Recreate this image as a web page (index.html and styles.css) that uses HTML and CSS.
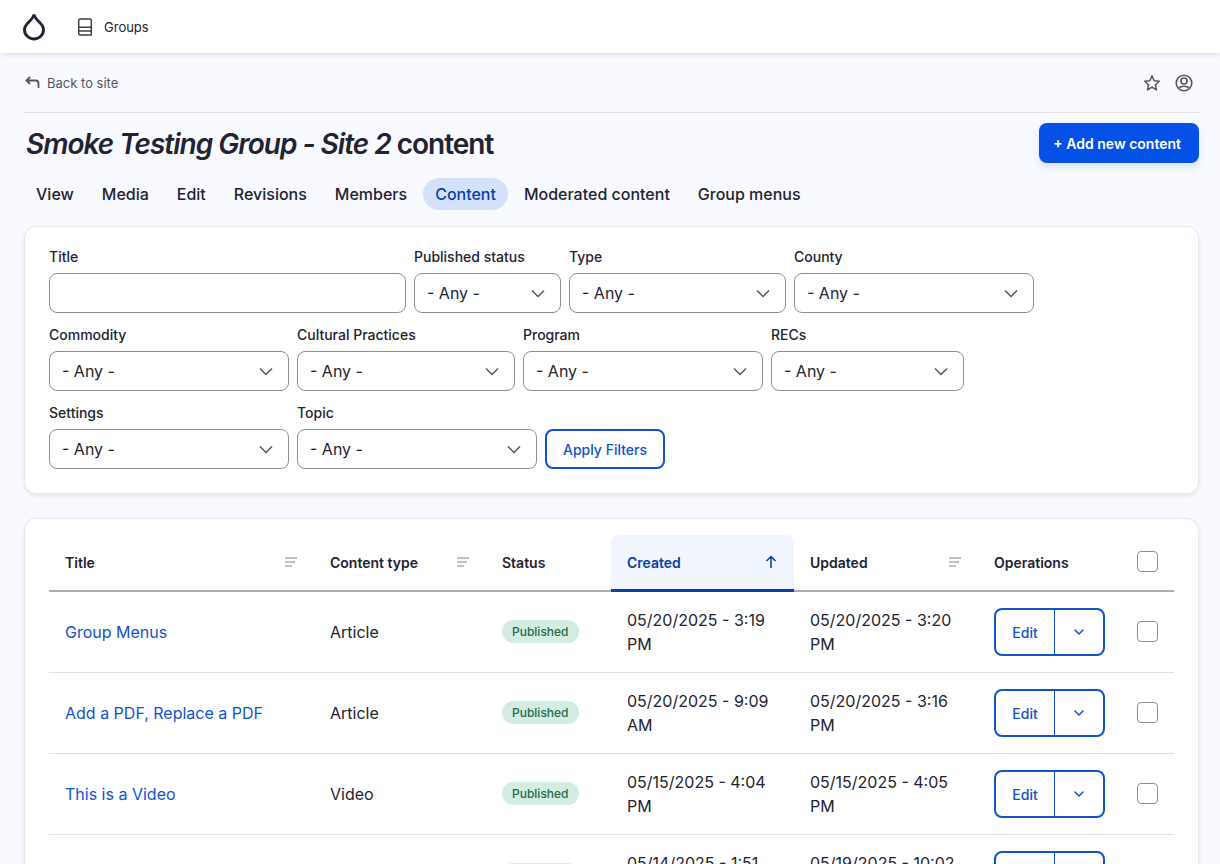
FILE: index.html
```html
<!DOCTYPE html>
<html lang="en">
<head>
  <meta charset="utf-8">
  <meta name="viewport" content="width=device-width, initial-scale=1">
  <title>Smoke Testing Group - Site 2 content</title>
  <link rel="stylesheet" href="styles.css">
</head>
<body>
  <svg class="sprite" aria-hidden="true">
    <symbol id="icon-sort" viewBox="0 0 12 10">
      <path d="M0 1h12M0 5h10M0 9h7" fill="none" stroke="currentColor" stroke-width="1.3"/>
    </symbol>
    <symbol id="icon-down" viewBox="0 0 10 6">
      <path d="M1 1l4 4 4-4" fill="none" stroke="currentColor" stroke-width="1.5" stroke-linecap="round" stroke-linejoin="round"/>
    </symbol>
  </svg>

  <!-- Toolbar -->
  <header class="toolbar">
    <a href="#" class="toolbar-logo" aria-label="Home">
      <svg width="22" height="28" viewBox="0 0 22 28">
        <path d="M11 1.500C10.200 4.700 7.900 6.900 5.800 9C3.600 11.200 1.500 13.700 1.500 16.700C1.500 21.900 5.800 26 11 26C16.200 26 20.500 21.900 20.500 16.700C20.500 13.700 18.400 11.200 16.200 9C14.100 6.900 11.800 4.700 11 1.500Z" fill="none" stroke="#222330" stroke-width="2.9"/>
      </svg>
    </a>
    <a href="#" class="toolbar-link">
      <svg width="16" height="18" viewBox="0 0 16 18">
        <path d="M3.200 1h9.600a1.500 1.500 0 0 1 1.500 1.500V17H3.200a1.500 1.500 0 0 1-1.500-1.500v-13A1.500 1.500 0 0 1 3.200 1zM1.700 9.200h12.600M2 12.900h12.300" fill="none" stroke="#414247" stroke-width="1.5"/>
      </svg>
      Groups
    </a>
  </header>

  <div class="page">
    <div class="secondary-bar">
      <a href="#" class="back-link">
        <svg width="15" height="14" viewBox="0 0 15 14">
          <path d="M5 1L1.500 4.500L5 8M1.500 4.500H10.500a3 3 0 0 1 3 3V12" fill="none" stroke="currentColor" stroke-width="1.8"/>
        </svg>
        Back to site
      </a>
      <div class="user-links">
        <a href="#" aria-label="Shortcuts">
          <svg width="18" height="18" viewBox="0 0 18 18">
            <path d="M9 1.800l2.100 4.900 5.200.5-3.900 3.500 1.100 5.200L9 13.200l-4.500 2.700 1.100-5.200L1.700 7.200l5.200-.5z" fill="none" stroke="currentColor" stroke-width="1.500" stroke-linejoin="round"/>
          </svg>
        </a>
        <a href="#" aria-label="Account">
          <svg width="18" height="18" viewBox="0 0 18 18">
            <g fill="none" stroke="currentColor" stroke-width="1.600">
              <circle cx="9" cy="9" r="7.800"/>
              <circle cx="9" cy="7" r="3"/>
              <path d="M3.500 14.300c1-2 2.600-2.100 5.500-2.100s4.500.1 5.500 2.100"/>
            </g>
          </svg>
        </a>
      </div>
    </div>

    <div class="title-bar">
      <h1><em>Smoke Testing Group - Site 2</em> content</h1>
      <button type="button" class="btn-primary">+ Add new content</button>
    </div>

    <nav class="tabs">
      <a href="#">View</a>
      <a href="#">Media</a>
      <a href="#">Edit</a>
      <a href="#">Revisions</a>
      <a href="#">Members</a>
      <a href="#" class="active">Content</a>
      <a href="#">Moderated content</a>
      <a href="#">Group menus</a>
    </nav>

    <form class="card filters">
      <div class="field field-title">
        <label for="title">Title</label>
        <input type="text" id="title" name="title">
      </div>
      <div class="field field-status">
        <label for="status">Published status</label>
        <select id="status" name="status"><option>- Any -</option></select>
      </div>
      <div class="field field-type">
        <label for="type">Type</label>
        <select id="type" name="type"><option>- Any -</option></select>
      </div>
      <div class="field">
        <label for="county">County</label>
        <select id="county" name="county"><option>- Any -</option></select>
      </div>
      <div class="field">
        <label for="commodity">Commodity</label>
        <select id="commodity" name="commodity"><option>- Any -</option></select>
      </div>
      <div class="field field-practices">
        <label for="practices">Cultural Practices</label>
        <select id="practices" name="practices"><option>- Any -</option></select>
      </div>
      <div class="field">
        <label for="program">Program</label>
        <select id="program" name="program"><option>- Any -</option></select>
      </div>
      <div class="field field-recs">
        <label for="recs">RECs</label>
        <select id="recs" name="recs"><option>- Any -</option></select>
      </div>
      <div class="field">
        <label for="settings">Settings</label>
        <select id="settings" name="settings"><option>- Any -</option></select>
      </div>
      <div class="field">
        <label for="topic">Topic</label>
        <select id="topic" name="topic"><option>- Any -</option></select>
      </div>
      <button type="button" class="btn-outline">Apply Filters</button>
    </form>

    <div class="card table-card">
      <table>
        <colgroup>
          <col>
          <col class="col-type">
          <col class="col-status">
          <col class="col-created">
          <col class="col-updated">
          <col class="col-ops">
          <col class="col-check">
        </colgroup>
        <thead>
          <tr>
            <th><a href="#" class="sort">Title <svg width="12" height="10"><use href="#icon-sort"/></svg></a></th>
            <th><a href="#" class="sort">Content type <svg width="12" height="10"><use href="#icon-sort"/></svg></a></th>
            <th>Status</th>
            <th class="sorted">
              <a href="#" class="sort">Created
                <svg width="12" height="14" viewBox="0 0 12 14"><path d="M6 13V2M1.500 6L6 1.500L10.500 6" fill="none" stroke="currentColor" stroke-width="1.500"/></svg>
              </a>
            </th>
            <th><a href="#" class="sort">Updated <svg width="12" height="10"><use href="#icon-sort"/></svg></a></th>
            <th>Operations</th>
            <th class="check"><input type="checkbox" aria-label="Select all rows"></th>
          </tr>
        </thead>
        <tbody>
          <tr>
            <td><a href="#">Group Menus</a></td>
            <td>Article</td>
            <td><span class="badge">Published</span></td>
            <td>05/20/2025 - 3:19 PM</td>
            <td>05/20/2025 - 3:20 PM</td>
            <td>
              <div class="dropbutton">
                <button type="button" class="edit">Edit</button>
                <button type="button" class="toggle" aria-label="More actions"><svg width="10" height="6"><use href="#icon-down"/></svg></button>
              </div>
            </td>
            <td class="check"><input type="checkbox" aria-label="Select row"></td>
          </tr>
          <tr>
            <td><a href="#">Add a PDF, Replace a PDF</a></td>
            <td>Article</td>
            <td><span class="badge">Published</span></td>
            <td>05/20/2025 - 9:09 AM</td>
            <td>05/20/2025 - 3:16 PM</td>
            <td>
              <div class="dropbutton">
                <button type="button" class="edit">Edit</button>
                <button type="button" class="toggle" aria-label="More actions"><svg width="10" height="6"><use href="#icon-down"/></svg></button>
              </div>
            </td>
            <td class="check"><input type="checkbox" aria-label="Select row"></td>
          </tr>
          <tr>
            <td><a href="#">This is a Video</a></td>
            <td>Video</td>
            <td><span class="badge">Published</span></td>
            <td>05/15/2025 - 4:04 PM</td>
            <td>05/15/2025 - 4:05 PM</td>
            <td>
              <div class="dropbutton">
                <button type="button" class="edit">Edit</button>
                <button type="button" class="toggle" aria-label="More actions"><svg width="10" height="6"><use href="#icon-down"/></svg></button>
              </div>
            </td>
            <td class="check"><input type="checkbox" aria-label="Select row"></td>
          </tr>
          <tr>
            <td></td>
            <td></td>
            <td><span class="badge">Published</span></td>
            <td>05/14/2025 - 1:51 PM</td>
            <td>05/19/2025 - 10:02 AM</td>
            <td>
              <div class="dropbutton">
                <button type="button" class="edit">Edit</button>
                <button type="button" class="toggle" aria-label="More actions"><svg width="10" height="6"><use href="#icon-down"/></svg></button>
              </div>
            </td>
            <td class="check"><input type="checkbox" aria-label="Select row"></td>
          </tr>
        </tbody>
      </table>
    </div>
  </div>
</body>
</html>
```
FILE: styles.css
```css
* {
  box-sizing: border-box;
}

body {
  margin: 0;
  background: #f9faff;
  color: #222330;
  font-family: Inter, "Liberation Sans", sans-serif;
  font-size: 16px;
  line-height: 24px;
}

a {
  color: inherit;
  text-decoration: none;
}

svg {
  display: block;
  flex: none;
}

button,
input,
select {
  margin: 0;
  font-family: inherit;
}

button {
  cursor: pointer;
}

.sprite {
  position: absolute;
  width: 0;
  height: 0;
}

/* Toolbar */
.toolbar {
  display: flex;
  align-items: center;
  gap: 32px;
  height: 53px;
  padding: 0 23px;
  background: #fff;
  box-shadow: 0 0 6px rgba(0, 0, 0, 0.18);
}

.toolbar-link {
  display: flex;
  align-items: center;
  gap: 11px;
  font-size: 13px;
}

.page {
  padding: 0 21px 24px 24px;
}

.secondary-bar {
  display: flex;
  align-items: center;
  justify-content: space-between;
  height: 60px;
  padding: 0 6px 0 1px;
  border-bottom: 1px solid #e0e2e8;
  color: #55565b;
}

.back-link {
  display: flex;
  align-items: center;
  gap: 7px;
  font-size: 13px;
}

.user-links {
  display: flex;
  gap: 14px;
}

.title-bar {
  display: flex;
  align-items: flex-start;
  justify-content: space-between;
  margin-top: 10px;
}

h1 {
  margin: 0 2px;
  font-size: 28px;
  font-weight: 600;
  line-height: 42px;
  letter-spacing: -1px;
}

.btn-primary {
  height: 40px;
  padding: 0 18px 0 14px;
  border: 0;
  border-radius: 8px;
  background: #0550e6;
  color: #fff;
  font-size: 14px;
  font-weight: 600;
  box-shadow: 0 4px 8px rgba(5, 80, 230, 0.15);
}

/* Tabs */
.tabs {
  display: flex;
  gap: 4px;
  margin: 13px 0 16px;
}

.tabs a {
  padding: 4px 12px;
  border-radius: 16px;
  font-weight: 500;
}

.tabs .active {
  background: #d3e1fa;
  color: #0a3ea8;
}

.card {
  border: 1px solid #e6e8ee;
  border-radius: 12px;
  background: #fff;
  box-shadow: 0 2px 4px rgba(0, 0, 0, 0.08);
}

/* Filters */
.filters {
  display: flex;
  flex-wrap: wrap;
  align-items: flex-end;
  gap: 12px 8px;
  margin-bottom: 24px;
  padding: 20px 24px 24px;
}

.field {
  width: 240px;
}

.field-title {
  width: 357px;
}

.field-status {
  width: 147px;
}

.field-type {
  width: 217px;
}

.field-practices {
  width: 218px;
}

.field-recs {
  width: 193px;
}

.field label {
  display: block;
  margin-bottom: 6px;
  font-size: 14px;
  font-weight: 500;
  line-height: 20px;
}

.field input,
.field select {
  display: block;
  width: 100%;
  height: 40px;
  padding: 0 12px;
  border: 1px solid #8e8f94;
  border-radius: 8px;
  background-color: #fff;
  color: #222330;
  font-size: 16px;
}

.field select {
  appearance: none;
  background-image: url("data:image/svg+xml,%3Csvg xmlns='http://www.w3.org/2000/svg' width='14' height='9' viewBox='0 0 14 9'%3E%3Cpath d='M1 1.500l6 6 6-6' fill='none' stroke='%23545560' stroke-width='1.500'/%3E%3C/svg%3E");
  background-position: right 15px center;
  background-repeat: no-repeat;
}

.btn-outline {
  height: 40px;
  padding: 0 16px;
  border: 2px solid #0f53cf;
  border-radius: 8px;
  background: #fff;
  color: #0f53cf;
  font-size: 14px;
  font-weight: 500;
}

/* Content table */
.table-card {
  padding: 16px 24px;
}

table {
  width: 100%;
  border-collapse: separate;
  border-spacing: 0;
  table-layout: fixed;
}

.col-type {
  width: 172px;
}

.col-status {
  width: 125px;
}

.col-created {
  width: 183px;
}

.col-updated {
  width: 184px;
}

.col-ops {
  width: 143px;
}

.col-check {
  width: 53px;
}

th {
  height: 57px;
  padding: 0 16px;
  border-bottom: 2px solid #adadad;
  font-size: 14px;
  font-weight: 600;
  text-align: left;
}

.sort {
  display: flex;
  align-items: center;
  justify-content: space-between;
}

.sort svg {
  margin: 0 1px 2px 0;
  color: #adadad;
}

.sorted {
  padding-top: 2px;
  border-bottom: 3px solid #0a3ea8;
  border-radius: 8px 8px 0 0;
  background: #f1f5fe;
  color: #0a3ea8;
}

.sorted .sort svg {
  color: inherit;
}

td {
  height: 81px;
  padding: 16px;
  border-bottom: 1px solid #e0e2e8;
}

td a {
  color: #0f53cf;
}

.badge {
  display: block;
  width: max-content;
  margin-bottom: 2px;
  padding: 0 10px;
  border-radius: 12px;
  background: #d4ede1;
  color: #246b48;
  font-size: 12px;
  font-weight: 500;
  line-height: 23px;
}

.dropbutton {
  display: flex;
  width: 111px;
  height: 48px;
  border: 2px solid #0f53cf;
  border-radius: 8px;
}

.dropbutton button {
  display: flex;
  align-items: center;
  justify-content: center;
  padding: 0;
  border: 0;
  background: none;
  color: #0f53cf;
  font-size: 14px;
  font-weight: 500;
}

.dropbutton .edit {
  width: 58px;
}

.dropbutton .toggle {
  flex: 1;
  border-left: 1px solid #0f53cf;
}

.check {
  padding: 0 16px 2px;
}

.check input {
  display: block;
  appearance: none;
  width: 21px;
  height: 21px;
  border: 1px solid #8e8f94;
  border-radius: 4px;
  background: #fff;
}
```
